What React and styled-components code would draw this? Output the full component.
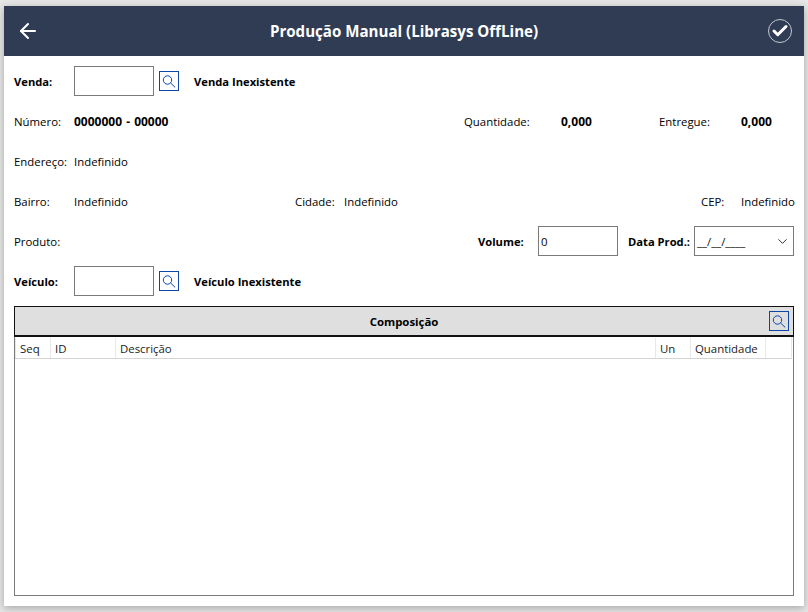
import styled, { createGlobalStyle } from "styled-components";
import { ArrowLeft, Check, ChevronDown } from "lucide-react";

const GlobalStyle = createGlobalStyle`
  html, body {
    margin: 0;
    height: 100%;
    background: #e6e6e6;
    overflow: hidden;
  }
  * {
    box-sizing: border-box;
  }
`;

const Page = styled.div`
  width: 808px;
  height: 612px;
  padding: 6px 4px;
  font-family: "Open Sans", "Noto Sans", sans-serif;
  font-size: 11.4px;
  color: #000;
`;

const Window = styled.div`
  width: 800px;
  height: 600px;
  background: #fff;
  display: flex;
  flex-direction: column;
  box-shadow: 0 2px 8px rgba(0, 0, 0, 0.28);
`;

const Header = styled.header`
  height: 50px;
  flex: none;
  background: #303c54;
  color: #fff;
  display: flex;
  align-items: center;
  justify-content: space-between;
  padding: 0 12px;
`;

const Title = styled.h1`
  margin: 0;
  font-size: 15.1px;
  font-weight: 700;
`;

const ConfirmCircle = styled.div`
  width: 24px;
  height: 24px;
  border: 1px solid #c4c8d0;
  border-radius: 50%;
  display: flex;
  align-items: center;
  justify-content: center;
`;

const Form = styled.div`
  flex: 1;
  display: flex;
  flex-direction: column;
  padding: 5px 10px 10px;
  min-height: 0;
`;

const Row = styled.div`
  height: 40px;
  flex: none;
  display: flex;
  align-items: center;
`;

const Label = styled.span`
  width: ${(p) => p.$width || 60}px;
  margin-left: ${(p) => p.$offset || 0}px;
  flex: none;
  white-space: nowrap;
  font-weight: ${(p) => (p.$bold ? 700 : 400)};
  font-size: ${(p) => (p.$bold ? "11.2px" : "inherit")};
`;

const NumberValue = styled(Label)`
  font-size: 12px;
  word-spacing: 1px;
`;

const TextBox = styled.div`
  width: 80px;
  height: 30px;
  flex: none;
  border: 1px solid #7a7a7a;
  background: #fff;
  display: flex;
  align-items: center;
  padding-left: 2px;
`;

const SearchButton = styled.button`
  width: 20px;
  height: 20px;
  flex: none;
  margin: ${(p) => p.$margin || "0 15px 0 5px"};
  padding: 0;
  border: 1px solid #0a47a8;
  background: ${(p) => p.$bg || "#fff"};
  color: #0a47a8;
  display: flex;
  align-items: center;
  justify-content: center;
`;

const DateBox = styled(TextBox)`
  width: 100px;
  justify-content: space-between;
  padding-right: 3px;
  color: #111;
`;

const Grid = styled.section`
  flex: 1;
  margin-top: 5px;
  min-height: 0;
  border: 1px solid #7a7a7a;
  border-top: none;
  display: flex;
  flex-direction: column;
`;

const GridTitle = styled.div`
  height: 31px;
  flex: none;
  margin: 0 -1px;
  background: #dfdfdf;
  border: 1px solid #111;
  border-bottom-width: 2px;
  display: flex;
  align-items: center;
  position: relative;
  justify-content: center;
  font-weight: 700;
`;

const TitleSearch = styled.div`
  position: absolute;
  right: 4px;
  top: 4px;
`;

const ColumnHeader = styled.div`
  height: 22px;
  flex: none;
  display: flex;
  margin-right: 1px;
  padding-top: 1px;
  border-right: 1px solid #e8e8e8;
  border-bottom: 1px solid #d4d4d4;
`;

const Column = styled.div`
  width: ${(p) => p.$width}px;
  flex: ${(p) => (p.$grow ? 1 : "none")};
  padding-left: 4px;
  display: flex;
  align-items: center;
  white-space: nowrap;
  color: #222;
  border-left: 1px solid #e8e8e8;
`;

const columns = [
  { name: "Seq", width: 35 },
  { name: "ID", width: 65 },
  { name: "Descrição", grow: true },
  { name: "Un", width: 35 },
  { name: "Quantidade", width: 75 },
  { name: "", width: 26 },
];

const SearchIcon = () => (
  <svg width="18" height="18" viewBox="0 0 18 18" fill="none" stroke="currentColor" strokeWidth="1">
    <circle cx="7.5" cy="8" r="4.2" />
    <path d="M10.6 11l4.6 4.4" />
  </svg>
);

const App = () => {
  return (
    <Page>
      <GlobalStyle />
      <Window>
        <Header>
          <ArrowLeft size={24} strokeWidth={2} />
          <Title>Produção Manual (Librasys OffLine)</Title>
          <ConfirmCircle>
            <Check size={18} strokeWidth={4} />
          </ConfirmCircle>
        </Header>
        <Form>
          <Row>
            <Label $bold>Venda:</Label>
            <TextBox />
            <SearchButton><SearchIcon /></SearchButton>
            <Label $bold>Venda Inexistente</Label>
          </Row>
          <Row>
            <Label>Número:</Label>
            <NumberValue $bold $width={390}>0000000 - 00000</NumberValue>
            <Label $width={97}>Quantidade:</Label>
            <NumberValue $bold $width={98}>0,000</NumberValue>
            <Label $width={82}>Entregue:</Label>
            <NumberValue $bold>0,000</NumberValue>
          </Row>
          <Row>
            <Label>Endereço:</Label>
            <Label>Indefinido</Label>
          </Row>
          <Row>
            <Label>Bairro:</Label>
            <Label $width={221}>Indefinido</Label>
            <Label $width={49}>Cidade:</Label>
            <Label $width={357}>Indefinido</Label>
            <Label $width={40}>CEP:</Label>
            <Label>Indefinido</Label>
          </Row>
          <Row>
            <Label $width={464}>Produto:</Label>
            <Label $bold>Volume:</Label>
            <TextBox>0</TextBox>
            <Label $bold $offset={10} $width={66}>Data Prod.:</Label>
            <DateBox>
              __/__/____
              <ChevronDown size={15} strokeWidth={1.4} />
            </DateBox>
          </Row>
          <Row>
            <Label $bold>Veículo:</Label>
            <TextBox />
            <SearchButton><SearchIcon /></SearchButton>
            <Label $bold>Veículo Inexistente</Label>
          </Row>
          <Grid>
            <GridTitle>
              Composição
              <TitleSearch>
                <SearchButton $margin="0" $bg="#dfdfdf"><SearchIcon /></SearchButton>
              </TitleSearch>
            </GridTitle>
            <ColumnHeader>
              {columns.map((c) => (
                <Column key={c.name} $width={c.width} $grow={c.grow}>{c.name}</Column>
              ))}
            </ColumnHeader>
          </Grid>
        </Form>
      </Window>
    </Page>
  );
};

export default App;
